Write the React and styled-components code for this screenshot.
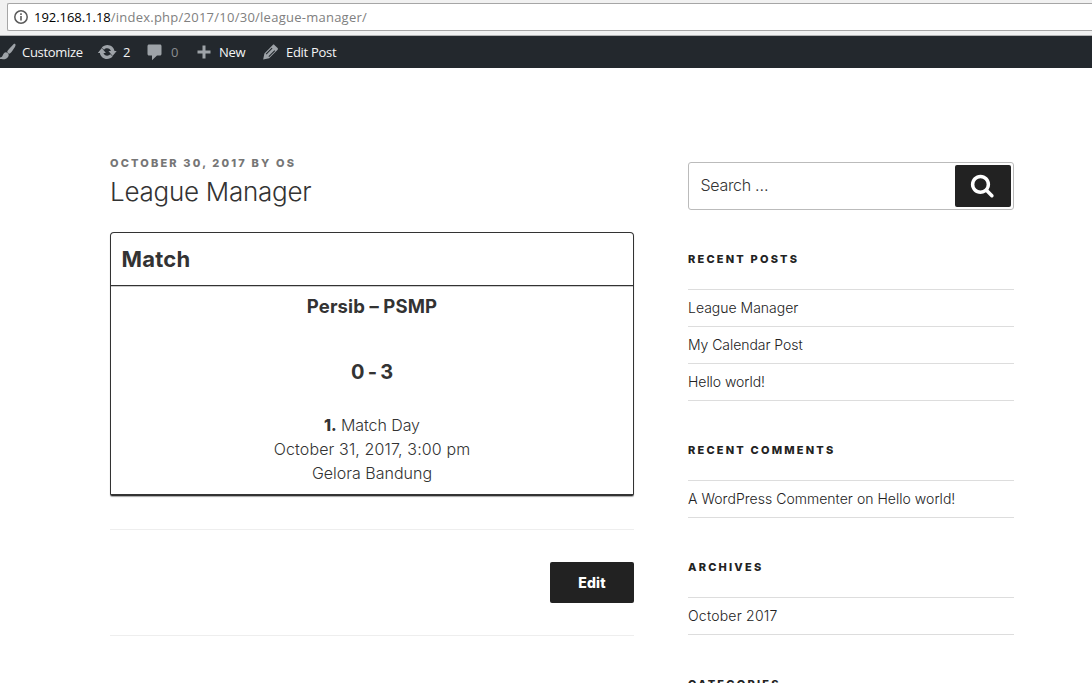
import React from "react";
import styled, { createGlobalStyle } from "styled-components";

const GlobalStyle = createGlobalStyle`
  *, *::before, *::after { box-sizing: border-box; }
  html, body { margin: 0; padding: 0; background: #fff; overflow: hidden; }
  body { font-family: Inter, "Libre Franklin", "Liberation Sans", sans-serif; color: #333; }
  h1, h2, h3, p, ul { margin: 0; padding: 0; }
  a { color: inherit; text-decoration: none; }
`;

const Page = styled.div`
  height: 683px;
  overflow: hidden;
  display: flex;
  flex-direction: column;
`;

const BrowserBar = styled.div`
  flex: none;
  height: 36px;
  padding: 3px 0 0 7px;
  background: #f1f1f1;
  border-bottom: 1px solid #b3b4b5;
`;

const AddressField = styled.div`
  height: 28px;
  display: flex;
  align-items: center;
  gap: 6px;
  padding-left: 6px;
  background: #fff;
  border: 1px solid #a6a6a6;
  border-right: 0;
  border-radius: 2px 0 0 2px;
  font: 13px/26px "Open Sans", "Noto Sans", sans-serif;
  letter-spacing: 0.25px;
  color: #808080;
  white-space: pre;
`;

const Host = styled.span`
  color: #000;
  letter-spacing: -0.04px;
`;

const AdminBar = styled.nav`
  flex: none;
  height: 32px;
  display: flex;
  background: #23282d;
  color: #eee;
  font: 13px/32px "Open Sans", "Noto Sans", sans-serif;
`;

const AdminItem = styled.a`
  display: flex;
  align-items: center;
  gap: ${(p) => p.$gap}px;
  width: ${(p) => p.$width}px;
  letter-spacing: -0.3px;
  color: ${(p) => (p.$dim ? "#8a8d90" : "#f4f4f4")};
  white-space: nowrap;
  svg { flex: none; fill: #9ea3a8; }
`;

const Content = styled.div`
  display: flex;
  align-items: flex-start;
  gap: 54px;
  padding: 86px 0 0 110px;
`;

const Main = styled.main`
  width: 524px;
  flex: none;
`;

const Meta = styled.p`
  font-size: 11px;
  line-height: 18px;
  font-weight: 800;
  letter-spacing: 2.17px;
  text-transform: uppercase;
  color: #767676;
  white-space: nowrap;
`;

const Title = styled.h1`
  margin-top: 2px;
  font-size: 26px;
  line-height: 36px;
  font-weight: 300;
  letter-spacing: -0.26px;
  white-space: nowrap;
`;

const MatchCard = styled.section`
  height: 264px;
  margin-top: 22px;
  border: 1px solid #333;
  border-bottom-width: 2px;
  border-radius: 4px 4px 2px 2px;
  box-shadow: 0 1px 1px rgba(0, 0, 0, 0.35);
`;

const CardHeader = styled.header`
  height: 53px;
  padding-left: 10.5px;
  border-bottom: 1px solid #333;
  box-shadow: 0 1px 0 #ccc;
  font-size: 22px;
  line-height: 52px;
  font-weight: 700;
  letter-spacing: 0.25px;
`;

const CardBody = styled.div`
  text-align: center;
  font-size: 16px;
  line-height: 24px;
  font-weight: 300;
  strong { font-weight: 800; }
`;

const Teams = styled.h3`
  padding-top: 8px;
  font-size: 18.5px;
  line-height: 24px;
  font-weight: 700;
  letter-spacing: 0.12px;
`;

const Score = styled.h2`
  margin: 41px 0 28px;
  font-size: 20px;
  line-height: 26px;
  font-weight: 700;
  letter-spacing: -0.1px;
  word-spacing: -1.3px;
`;

const Line = styled.p`
  letter-spacing: ${(p) => p.$tracking || "0"};
`;

const EditRow = styled.footer`
  display: flex;
  justify-content: flex-end;
  height: 107px;
  margin-top: 33px;
  padding-top: 32px;
  border-top: 1px solid #eee;
  border-bottom: 1px solid #eee;
`;

const EditButton = styled.a`
  width: 84px;
  height: 41px;
  border-radius: 2px;
  background: #222;
  color: #fff;
  font-size: 14px;
  line-height: 42px;
  font-weight: 800;
  letter-spacing: 0.15px;
  text-align: center;
`;

const Sidebar = styled.aside`
  width: 326px;
  flex: none;
  padding-top: 8px;
`;

const SearchForm = styled.div`
  display: flex;
  justify-content: space-between;
  height: 48px;
  padding: 2px 2px 2px 11.5px;
  border: 1px solid #bbb;
  border-radius: 3px;
  font-size: 16px;
  line-height: 41px;
  font-weight: 300;
  letter-spacing: -0.3px;
  color: #333;
`;

const SearchButton = styled.span`
  display: flex;
  align-items: center;
  justify-content: center;
  width: 56px;
  height: 42px;
  padding: 0 1px 1px 0;
  border-radius: 2px;
  background: #222;
`;

const WidgetTitle = styled.h2`
  margin: 40px 0 21px;
  font-size: 11px;
  line-height: 18px;
  font-weight: 800;
  letter-spacing: 2.2px;
  text-transform: uppercase;
  color: #222;
`;

const WidgetList = styled.ul`
  list-style: none;
  border-top: 1px solid #ddd;
`;

const WidgetItem = styled.li`
  height: 37px;
  border-bottom: 1px solid #ddd;
  font-size: 14px;
  line-height: 36px;
  font-weight: 300;
  letter-spacing: ${(p) => p.$tracking || "0"};
  color: #222;
`;

const InfoIcon = () => (
  <svg width="14" height="14" viewBox="0 0 14 14">
    <circle cx="7" cy="7" r="6.2" fill="none" stroke="#5a5a5a" strokeWidth="1.5" />
    <path d="M6.2 6h1.6v4.5H6.2zM6.2 3.3h1.6v1.6H6.2z" fill="#5a5a5a" />
  </svg>
);

const BrushIcon = () => (
  <svg width="16" height="18" viewBox="0 0 16 18">
    <path d="M15.200 1c.8.900.2 2.200-.6 3.500-1.300 2-3 4.700-4.400 5.800-.8.600-1.500.4-2.200-.3-.7-.7-1-1.400-.4-2.200C8.700 6.200 11 3.700 12.800 1.900 13.600 1.100 14.600.3 15.200 1zM6.500 9.400c1 .2 2.100 1.300 2.200 2.400.1 1.600-1 3.300-2.700 4C4.200 16.600 1.500 16.200 0 16.100v-1.600c1.400-.1 2.100-.8 2.800-2.300.5-1.200 1.800-3.200 3.700-2.800z" />
  </svg>
);

const UpdateIcon = () => (
  <svg width="20" height="20" viewBox="0.800 0 20 20">
    <path d="M10.200 2.900c3.700 0 6.730 2.900 7.120 6.100h2.180l-4.100 4.900-4.100-4.900h2.420c-.450-1.600-1.910-2.750-3.720-2.750-1.250 0-2.330.510-3.140 1.380L4.550 5.460C5.830 4 8.110 2.900 10.200 2.900zm-.4 14.200c-3.700 0-6.730-2.900-7.120-6.100H.5l4.100-4.900 4.100 4.900H6.280c.450 1.600 1.910 2.750 3.720 2.750 1.250 0 2.330-.510 3.140-1.380l2.310 2.170c-1.280 1.460-3.550 2.560-5.650 2.560z" />
  </svg>
);

const CommentIcon = () => (
  <svg width="20" height="20" viewBox="0 0 20 20">
    <path d="M4 2.500h11c.8 0 1.500.7 1.500 1.500v8c0 .800-.7 1.500-1.500 1.500h-3L7 18.300v-4.800H4c-.8 0-1.500-.7-1.500-1.500V4c0-.800.7-1.500 1.500-1.500z" />
  </svg>
);

const PlusIcon = () => (
  <svg width="14" height="14" viewBox="0 0 14 14">
    <path d="M5.500 .5h3v5h5v3h-5v5h-3v-5h-5v-3h5z" />
  </svg>
);

const PencilIcon = () => (
  <svg width="20" height="20" viewBox="0.500 0 20 20">
    <path d="M13.900 2.900l3.200 3.200c.5.500.45 1.250.05 1.650l-8.500 8.500-6 1.300 1.250-6L12.250 2.950c.4-.4 1.200-.5 1.650-.05z" />
    <path d="M5.600 12.100l6-6M8.300 14.700l6-6" fill="none" stroke="#23282d" strokeWidth="1.100" />
  </svg>
);

const SearchIcon = () => (
  <svg width="24.5" height="24.5" viewBox="0 0 1792 1792" fill="#fff">
    <path d="M1216 832q0-185-131.500-316.500t-316.500-131.500-316.500 131.500-131.500 316.500 131.500 316.500 316.500 131.500 316.500-131.500 131.500-316.500zm512 832q0 52-38 90t-90 38q-54 0-90-38l-343-342q-179 124-399 124-143 0-273.500-55.500t-225-150-150-225-55.500-273.500 55.500-273.500 150-225 225-150 273.500-55.500 273.500 55.500 225 150 150 225 55.500 273.500q0 220-124 399l343 343q37 37 37 90z" />
  </svg>
);

const widgets = [
  { title: "Recent Posts", items: [["League Manager"], ["My Calendar Post", "-0.05px"], ["Hello world!", "-0.05px"]] },
  { title: "Recent Comments", items: [["A WordPress Commenter on Hello world!", "0.03px"]] },
  { title: "Archives", items: [["October 2017", "0.22px"]] },
  { title: "Categories", items: [] },
];

export default function App() {
  return (
    <Page>
      <GlobalStyle />
      <BrowserBar>
        <AddressField>
          <InfoIcon />
          <span><Host>192.168.1.18</Host>/index.php/2017/10/30/league-manager/</span>
        </AddressField>
      </BrowserBar>
      <AdminBar>
        <AdminItem $gap={6} $width={98}><BrushIcon />Customize</AdminItem>
        <AdminItem $gap={5} $width={47}><UpdateIcon />2</AdminItem>
        <AdminItem $gap={6} $width={52} $dim><CommentIcon />0</AdminItem>
        <AdminItem $gap={8} $width={64}><PlusIcon />New</AdminItem>
        <AdminItem $gap={5} $width={90}><PencilIcon />Edit Post</AdminItem>
      </AdminBar>
      <Content>
        <Main>
          <Meta>October 30, 2017 by os</Meta>
          <Title>League Manager</Title>
          <MatchCard>
            <CardHeader>Match</CardHeader>
            <CardBody>
              <Teams>Persib – PSMP</Teams>
              <Score>0 - 3</Score>
              <Line $tracking="-0.08px"><strong>1.</strong> Match Day</Line>
              <Line $tracking="0.13px">October 31, 2017, 3:00 pm</Line>
              <Line>Gelora Bandung</Line>
            </CardBody>
          </MatchCard>
          <EditRow><EditButton>Edit</EditButton></EditRow>
        </Main>
        <Sidebar>
          <SearchForm>Search …<SearchButton><SearchIcon /></SearchButton></SearchForm>
          {widgets.map((w) => (
            <React.Fragment key={w.title}>
              <WidgetTitle>{w.title}</WidgetTitle>
              <WidgetList>
                {w.items.map(([text, tracking]) => (
                  <WidgetItem key={text} $tracking={tracking}>{text}</WidgetItem>
                ))}
              </WidgetList>
            </React.Fragment>
          ))}
        </Sidebar>
      </Content>
    </Page>
  );
}
